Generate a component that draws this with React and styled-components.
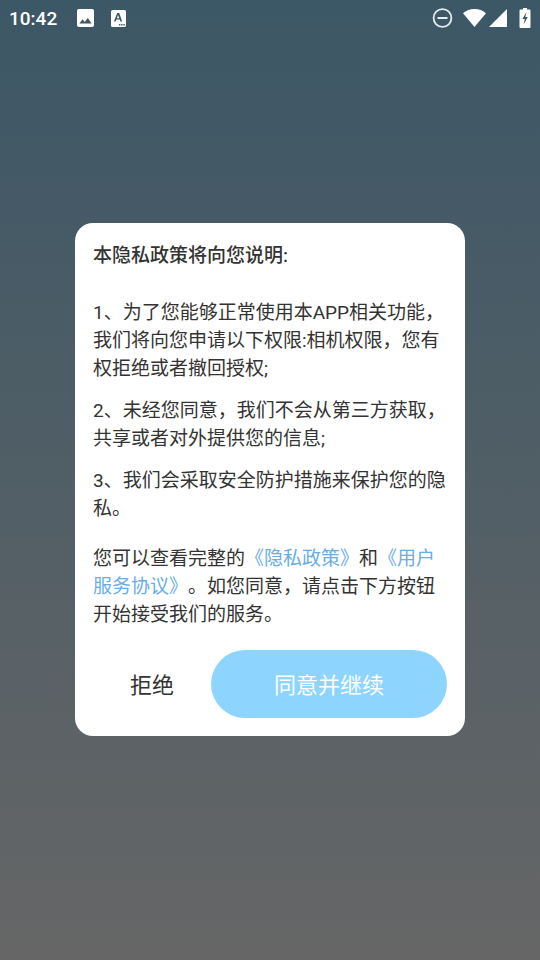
import React from 'react';
import styled, { createGlobalStyle } from 'styled-components';

const GlobalStyle = createGlobalStyle`
  html, body {
    margin: 0;
    padding: 0;
  }
  body {
    font-family: "Roboto", "Noto Sans CJK SC", sans-serif;
  }
`;

const Screen = styled.div`
  width: 540px;
  height: 960px;
  display: flex;
  flex-direction: column;
  background: linear-gradient(180deg, #3c5766 0%, #666666 100%);
  overflow: hidden;
`;

const StatusBar = styled.div`
  height: 36px;
  display: flex;
  align-items: center;
  padding: 0 9px 0 9px;
  color: #fff;
`;

const Time = styled.span`
  font-size: 19px;
  font-weight: 500;
  width: 68px;
`;

const StatusIcons = styled.div`
  display: flex;
  align-items: center;
  gap: 17px;
`;

const SystemIcons = styled.div`
  margin-left: auto;
  display: flex;
  align-items: center;
`;

const Middle = styled.div`
  flex: 1;
  display: flex;
  justify-content: center;
  padding-top: 187px;
`;

const Card = styled.div`
  width: 390px;
  height: 513px;
  box-sizing: border-box;
  background: #fff;
  border-radius: 18px;
  padding: 19px 18px 18px 18px;
  display: flex;
  flex-direction: column;
  color: #333;
  font-family: "Roboto", "Noto Sans CJK SC", sans-serif;
  font-size: 19px;
  line-height: 28px;
  text-spacing-trim: space-all;
`;

const Title = styled.div`
  font-weight: 500;
  margin-bottom: 29px;
`;

const Para = styled.p`
  margin: 0 0 ${(p) => p.$gap || 14}px;
`;

const Link = styled.span`
  color: #68ade8;
`;

const Actions = styled.div`
  margin-top: auto;
  display: flex;
  align-items: center;
`;

const RefuseButton = styled.button`
  width: 118px;
  border: 0;
  background: none;
  padding: 3px 0 0;
  color: #333;
  font: inherit;
  font-size: 22px;
`;

const AgreeButton = styled.button`
  width: 236px;
  height: 68px;
  border: 0;
  border-radius: 34px;
  padding: 3px 0 0;
  background: #8dd5ff;
  color: #fff;
  font: inherit;
  font-size: 22px;
`;

const WifiSvg = styled.svg`
  margin-left: 10px;
`;

const SignalSvg = styled.svg`
  margin-left: 3px;
`;

const BatterySvg = styled.svg`
  margin-left: 12px;
`;

const ImageIcon = () => (
  <svg width="17" height="18" viewBox="0 0 18 18" preserveAspectRatio="none">
    <path
      fill="#fff"
      fillRule="evenodd"
      d="M2 0h14a2 2 0 0 1 2 2v14a2 2 0 0 1-2 2H2a2 2 0 0 1-2-2V2a2 2 0 0 1 2-2zM2.5 14.5h13L11.4 9l-3.2 4-2.3-2.8z"
    />
  </svg>
);

const FontIcon = () => (
  <svg width="15" height="17" viewBox="0 0 15 17">
    <path
      fill="#fff"
      fillRule="evenodd"
      d="M1.5 0h12A1.5 1.5 0 0 1 15 1.5v14a1.5 1.5 0 0 1-1.5 1.5h-12A1.5 1.5 0 0 1 0 15.5v-14A1.5 1.5 0 0 1 1.5 0zM6.2 3 2.9 11.5h1.7l.7-1.9h3.5l.7 1.9h1.7L8.2 3zM5.8 8.2h2.5L7 4.9z"
    />
    <path fill="#3d5866" d="M8 14h1.4v1.4H8zM10.2 14h1.4v1.4h-1.4zM12.4 14h1.4v1.4h-1.4z" />
  </svg>
);

const DndIcon = () => (
  <svg width="21" height="20" viewBox="0 0 21 20">
    <circle cx="10.5" cy="10" r="8.9" fill="none" stroke="#e6ecef" strokeWidth="1.8" />
    <rect x="5.5" y="9" width="10" height="2" fill="#e6ecef" />
  </svg>
);

const WifiIcon = () => (
  <WifiSvg width="23" height="18" viewBox="0 0 23 18">
    <path fill="#fff" d="M11.5 18 0 4.2C3 1.6 7 0 11.5 0S20 1.6 23 4.2z" />
  </WifiSvg>
);

const SignalIcon = () => (
  <SignalSvg width="18" height="18" viewBox="0 0 18 18">
    <path fill="#fff" d="M18 0v18H0z" />
  </SignalSvg>
);

const BatteryIcon = () => (
  <BatterySvg width="12" height="20" viewBox="0 0 12 20">
    <path
      fill="#fff"
      fillRule="evenodd"
      d="M4 0h4v1.5h2.5a1 1 0 0 1 1 1V19a1 1 0 0 1-1 1h-9a1 1 0 0 1-1-1V2.5a1 1 0 0 1 1-1H4zM7.4 4 3.4 11h2.4l-1.2 5.5L8.8 9H6.3z"
    />
  </BatterySvg>
);

const App = () => (
  <Screen>
    <GlobalStyle />
    <StatusBar>
      <Time>10:42</Time>
      <StatusIcons>
        <ImageIcon />
        <FontIcon />
      </StatusIcons>
      <SystemIcons>
        <DndIcon />
        <WifiIcon />
        <SignalIcon />
        <BatteryIcon />
      </SystemIcons>
    </StatusBar>
    <Middle>
      <Card>
        <Title>本隐私政策将向您说明:</Title>
        <Para>1、为了您能够正常使用本APP相关功能，我们将向您申请以下权限:相机权限，您有权拒绝或者撤回授权;</Para>
        <Para>2、未经您同意，我们不会从第三方获取，共享或者对外提供您的信息;</Para>
        <Para $gap={22}>3、我们会采取安全防护措施来保护您的隐私。</Para>
        <Para>
          您可以查看完整的<Link>《隐私政策》</Link>和<Link>《用户服务协议》</Link>。如您同意，请点击下方按钮开始接受我们的服务。
        </Para>
        <Actions>
          <RefuseButton>拒绝</RefuseButton>
          <AgreeButton>同意并继续</AgreeButton>
        </Actions>
      </Card>
    </Middle>
  </Screen>
);

export default App;
